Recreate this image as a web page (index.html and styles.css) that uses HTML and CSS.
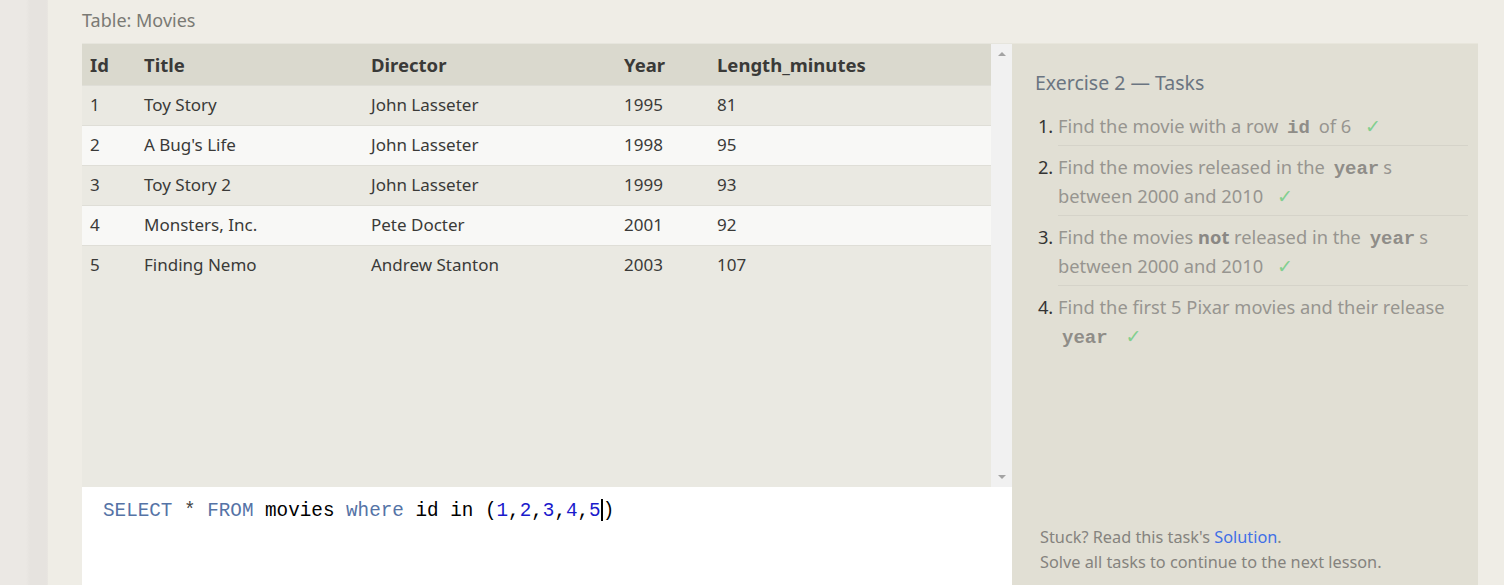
FILE: index.html
```html
<!DOCTYPE html>
<html>
<head>
<meta charset="utf-8">
<link rel="stylesheet" href="styles.css">
</head>
<body>
<div class="side"></div>
<div class="main">
  <div class="caption">Table: Movies</div>
  <div class="work">
    <div class="left">
      <div class="tablebox">
        <div class="tablescroll">
          <table class="movies">
            <colgroup>
              <col class="c-id"><col class="c-title"><col class="c-dir"><col class="c-year"><col class="c-len">
            </colgroup>
            <thead>
              <tr><th>Id</th><th>Title</th><th>Director</th><th>Year</th><th>Length_minutes</th></tr>
            </thead>
            <tbody>
              <tr><td>1</td><td>Toy Story</td><td>John Lasseter</td><td>1995</td><td>81</td></tr>
              <tr><td>2</td><td>A Bug's Life</td><td>John Lasseter</td><td>1998</td><td>95</td></tr>
              <tr><td>3</td><td>Toy Story 2</td><td>John Lasseter</td><td>1999</td><td>93</td></tr>
              <tr><td>4</td><td>Monsters, Inc.</td><td>Pete Docter</td><td>2001</td><td>92</td></tr>
              <tr><td>5</td><td>Finding Nemo</td><td>Andrew Stanton</td><td>2003</td><td>107</td></tr>
            </tbody>
          </table>
        </div>
        <div class="scrollbar">
          <span class="arrow up"></span>
          <span class="arrow down"></span>
        </div>
      </div>
      <div class="editor"><span class="kw">SELECT</span> <span class="op">*</span> <span class="kw">FROM</span> movies <span class="kw">where</span> id in (<span class="num">1</span>,<span class="num">2</span>,<span class="num">3</span>,<span class="num">4</span>,<span class="num">5</span><span class="cursor"></span>)</div>
    </div>
    <div class="tasks">
      <h2 class="tasks-title">Exercise 2 — Tasks</h2>
      <ol class="task-list">
        <li><span class="done">Find the movie with a row <code>id</code> of 6 <span class="check">✓</span></span></li>
        <li><span class="done">Find the movies released in the <code>year</code>s between 2000 and 2010 <span class="check">✓</span></span></li>
        <li><span class="done">Find the movies <b>not</b> released in the <code>year</code>s between 2000 and 2010 <span class="check">✓</span></span></li>
        <li><span class="done">Find the first 5 Pixar movies and their release <code>year</code> <span class="check">✓</span></span></li>
      </ol>
      <div class="help">
        <div>Stuck? Read this task's <a class="link" href="#">Solution</a>.</div>
        <div>Solve all tasks to continue to the next lesson.</div>
      </div>
    </div>
  </div>
</div>
</body>
</html>
```
FILE: styles.css
```css
html, body {
  margin: 0;
  padding: 0;
  height: 585px;
  overflow: hidden;
}
body {
  display: flex;
  background: #efede6;
  font-family: "Noto Sans", "Open Sans", sans-serif;
  color: #333;
}
.side {
  width: 48px;
  flex: none;
  background: linear-gradient(to right, #ebe8e4 0, #ebe8e4 26px, #e6e3df 30px, #e6e3df 46px, #e9e6e1 48px);
}
.main {
  flex: 1;
  padding-left: 34px;
  display: flex;
  flex-direction: column;
}
.caption {
  height: 43px;
  box-sizing: border-box;
  padding-top: 7px;
  font-size: 18px;
  line-height: 26px;
  color: #7a7a74;
}
.work {
  flex: 1;
  display: flex;
}
.left {
  width: 930px;
  flex: none;
  display: flex;
  flex-direction: column;
}
.tablebox {
  height: 444px;
  flex: none;
  display: flex;
  background: #eae9e2;
  border-top: 1px solid #e6e5dd;
  box-sizing: border-box;
}
.tablescroll {
  flex: 1;
}
.movies {
  width: 909px;
  border-collapse: collapse;
  table-layout: fixed;
}
.c-id { width: 54px; }
.c-title { width: 227px; }
.c-dir { width: 253px; }
.c-year { width: 93px; }
.c-len { width: 282px; }
.movies th {
  height: 41px;
  box-sizing: border-box;
  background: #dad9ce;
  text-align: left;
  padding: 0 8px 0;
  font-size: 18.5px;
  font-weight: 700;
  color: #3a3a38;
}
.movies td {
  height: 40px;
  box-sizing: border-box;
  padding: 0 8px 2px;
  font-size: 17px;
  border-top: 1px solid #dfded7;
  color: #3a3a38;
}
.movies tbody tr:nth-child(odd) td { background: #eae9e2; }
.movies tbody tr:nth-child(even) td { background: #f8f8f6; }
.scrollbar {
  width: 21px;
  flex: none;
  background: #f1f1f1;
  display: flex;
  flex-direction: column;
  justify-content: space-between;
  align-items: center;
  padding: 8px 0 8px;
  box-sizing: border-box;
}
.arrow {
  width: 0;
  height: 0;
  border-left: 4px solid transparent;
  border-right: 4px solid transparent;
}
.arrow.up { border-bottom: 4px solid #a3a3a3; }
.arrow.down { border-top: 4px solid #a3a3a3; }
.editor {
  flex: 1;
  background: #fff;
  padding: 12px 0 0 21px;
  font-family: "Liberation Mono", "DejaVu Sans Mono", monospace;
  font-size: 19.3px;
  line-height: 24px;
  color: #000;
  white-space: pre;
}
.kw { color: #5573a6; }
.op { color: #444; }
.num { color: #1a1acc; }
.cursor {
  display: inline-block;
  width: 0;
  height: 22px;
  border-left: 2px solid #000;
  vertical-align: -5px;
}
.tasks {
  width: 466px;
  flex: none;
  background: #e1dfd4;
  border-top: 1px solid #e8e6dc;
  box-sizing: border-box;
  padding: 27px 10px 10px 23px;
  display: flex;
  flex-direction: column;
}
.tasks-title {
  margin: 0;
  font-size: 19.5px;
  font-weight: 400;
  line-height: 24px;
  color: #6b7581;
}
.task-list {
  margin: 10px 0 0;
  padding: 0 0 0 23px;
}
.task-list li {
  font-size: 18.3px;
  line-height: 29px;
  padding: 6px 0 5px;
  border-bottom: 1px solid #d5d3c9;
  color: #333;
}
.task-list li:last-child { border-bottom: none; }
.done { color: #979590; }
.done b { color: #8a8884; }
.task-list code {
  font-family: "Liberation Mono", "DejaVu Sans Mono", monospace;
  font-weight: 700;
  font-size: 19px;
  line-height: 1;
  color: #8f8d88;
  padding: 0 4px;
}
.check {
  display: inline-block;
  font-family: "DejaVu Sans", sans-serif;
  font-size: 19px;
  line-height: 1;
  color: #82cf8f;
  margin-left: 9px;
}
.help {
  margin-top: auto;
  padding-left: 5px;
  font-size: 16.3px;
  line-height: 25px;
  color: #85837e;
}
.link {
  color: #3f6fe6;
  text-decoration: none;
}
```
